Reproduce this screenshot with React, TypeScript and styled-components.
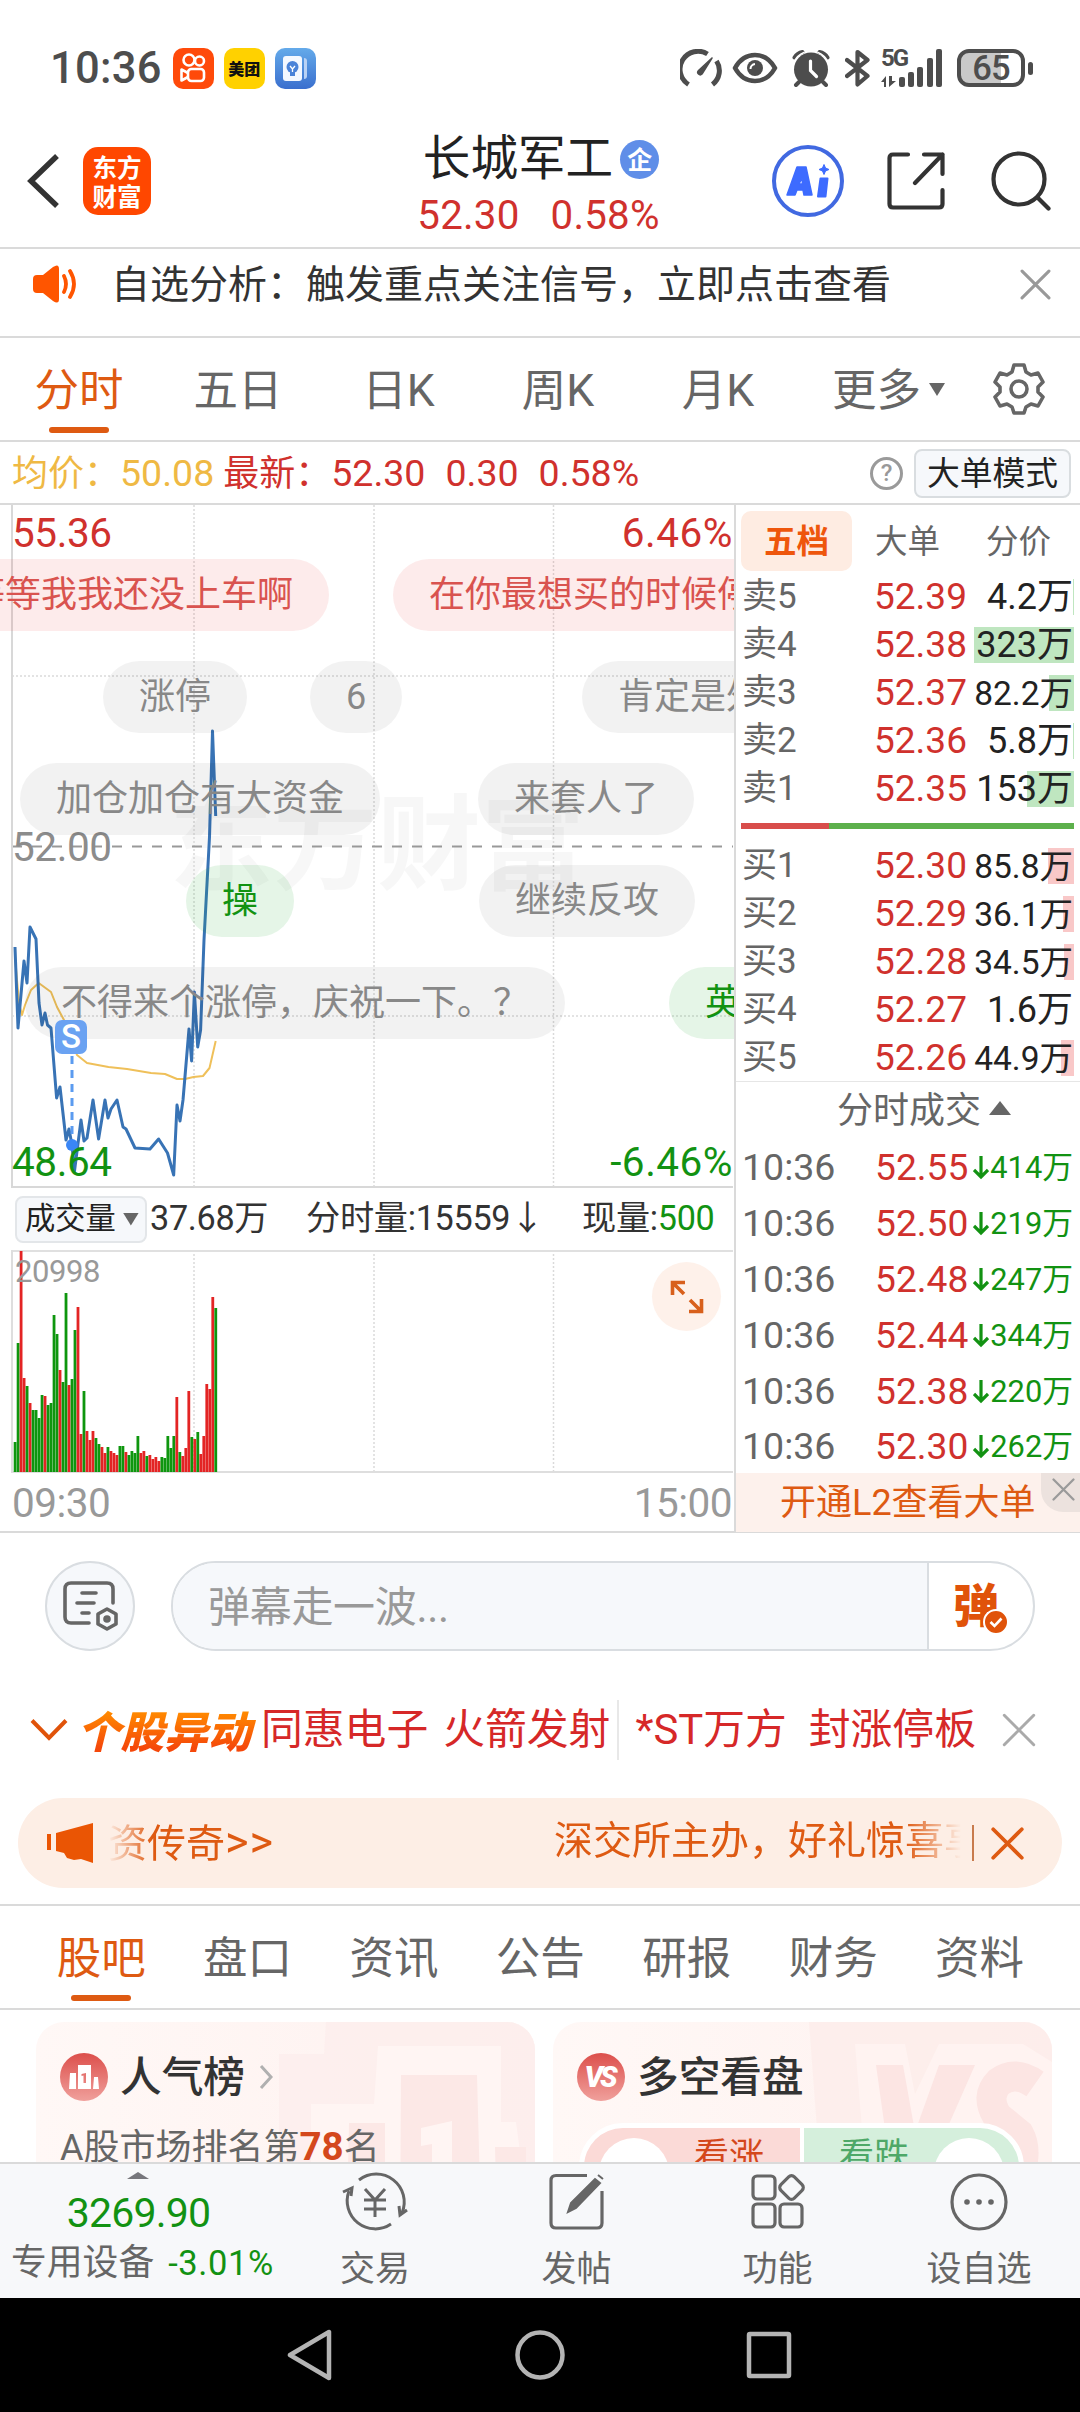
import React from 'react';
import styled, { createGlobalStyle, css } from 'styled-components';

const RED = '#d0312d';
const GREEN = '#129212';
const ORANGE = '#de5a12';
const LINE = '#dadada';

const Global = createGlobalStyle`
  html, body { margin: 0; padding: 0; background: #fff; }
  * { box-sizing: border-box; }
  body {
    font-family: Roboto, "Noto Sans CJK SC", sans-serif;
    line-height: 1.2;
    color: #333;
    -webkit-font-smoothing: antialiased;
  }
  svg { display: block; flex: none; }
`;

const Page = styled.div`
  width: 1080px;
  height: 2412px;
  display: flex;
  flex-direction: column;
  overflow: hidden;
  background: #fff;
  white-space: nowrap;
`;

/* ---------- status bar ---------- */
const StatusBar = styled.div`
  height: 110px;
  padding: 28px 47px 0 50px;
  display: flex;
  align-items: flex-start;
  justify-content: space-between;
`;
const StatusGroup = styled.div`
  height: 80px;
  display: flex;
  align-items: center;
  gap: 10px;
`;
const StatusIcon = styled.span<{ $ml?: number }>`
  margin-left: ${(p) => p.$ml || 0}px;
`;
const Clock = styled.span`
  font-size: 43.5px;
  font-weight: 500;
  line-height: 80px;
  padding-top: 1px;
  color: #4d4d4d;
  letter-spacing: 0.3px;
  margin-right: 1px;
`;
const AppTile = styled.span<{ $bg: string }>`
  width: 41px;
  height: 41px;
  border-radius: 10px;
  background: ${(p) => p.$bg};
  display: flex;
  align-items: center;
  justify-content: center;
  font: 900 16px/41px "Noto Sans CJK SC", sans-serif;
  color: #111;
`;
const Signal = styled.div`
  width: 64px;
  height: 38px;
  display: grid;
  grid-template-columns: 26px 1fr;
`;
const SignalLeft = styled.div`
  display: flex;
  flex-direction: column;
  justify-content: space-between;
  font: 700 24px/19px Roboto, sans-serif;
  letter-spacing: -2px;
  color: #4d4d4d;
`;
const Bars = styled.div`
  display: flex;
  align-items: flex-end;
  gap: 3.2px;
  margin-left: -8px;
`;
const Bar = styled.i<{ $h: number }>`
  width: 6px;
  height: ${(p) => p.$h}px;
  border-radius: 2px;
  background: #4d4d4d;
`;
const BatteryWrap = styled.div`
  display: flex;
  align-items: center;
  gap: 3px;
  margin-left: 2px;
`;
const Battery = styled.div`
  width: 68px;
  height: 38px;
  border: 4px solid #4d4d4d;
  border-radius: 12px;
  background: linear-gradient(90deg, #c9c9c9 66%, #fff 66%);
  text-align: center;
  font: 500 34.5px/31px Roboto, sans-serif;
  letter-spacing: -0.8px;
  color: #4d4d4d;
`;
const Nub = styled.i`
  width: 5px;
  height: 13px;
  border-radius: 3px;
  background: #4d4d4d;
`;

/* ---------- header ---------- */
const Header = styled.header`
  height: 139px;
  border-bottom: 2px solid ${LINE};
  display: grid;
  grid-template-columns: 405px 1fr 405px;
`;
const HeaderLeft = styled.div`
  display: flex;
  align-items: center;
  padding: 4px 0 0 26px;
  gap: 23px;
`;
const Logo = styled.div`
  width: 68px;
  height: 68px;
  border-radius: 15px;
  background: #ff4700;
  color: #fff;
  font: 700 24.5px/29px "Noto Sans CJK SC", sans-serif;
  display: flex;
  flex-direction: column;
  align-items: center;
  justify-content: center;
`;
const HeaderMid = styled.div`
  display: flex;
  flex-direction: column;
  align-items: center;
  padding-top: 19px;
`;
const TitleRow = styled.div`
  height: 60px;
  display: flex;
  align-items: center;
  gap: 7px;
  padding-left: 2px;
  font-size: 47.6px;
  line-height: 60px;
  color: #222;
`;
const QiBadge = styled.span`
  width: 39px;
  height: 39px;
  border-radius: 50%;
  background: #5f8ee8;
  color: #fff;
  font: 700 25px/37px "Noto Sans CJK SC", sans-serif;
  text-align: center;
`;
const QuoteRow = styled.div`
  height: 50px;
  display: flex;
  align-items: center;
  gap: 31px;
  margin-top: 2px;
  font-size: 40.3px;
  letter-spacing: 0.2px;
  padding-right: 3px;
  color: ${RED};
`;
const HeaderRight = styled.div`
  display: flex;
  align-items: center;
  padding: 4px 0 0 97px;
`;
const AiBadge = styled.div`
  width: 72px;
  height: 72px;
  border: 4px solid #4169e1;
  border-radius: 50%;
  display: flex;
  align-items: center;
  justify-content: center;
  margin-right: 43px;
`;
const SearchButton = styled.span`
  margin-left: 46px;
`;

/* ---------- notice ---------- */
const Notice = styled.div`
  height: 89px;
  border-bottom: 2px solid ${LINE};
  display: flex;
  align-items: center;
  padding: 0 29px 17px 33px;
`;
const NoticeText = styled.span`
  flex: 1;
  padding: 1px 0 0 32px;
  font-size: 39px;
  line-height: 60px;
`;

/* ---------- period tabs ---------- */
const Tabs = styled.nav`
  height: 104px;
  border-bottom: 2px solid ${LINE};
  display: grid;
  grid-template-columns: 158px 160px 161px 158px 162px 171px 98px;
`;
const Tab = styled.div<{ $active?: boolean }>`
  display: flex;
  flex-direction: column;
  align-items: center;
  font-size: 44.5px;
  line-height: 60px;
  padding-top: 23px;
  color: ${(p) => (p.$active ? ORANGE : '#666')};
  ${(p) =>
    p.$active &&
    css`
      &::after {
        content: '';
        width: 60px;
        height: 6px;
        border-radius: 3px;
        margin-top: 6px;
        background: ${ORANGE};
      }
    `}
`;
const MoreTab = styled(Tab)`
  flex-direction: row;
  align-items: flex-start;
  justify-content: flex-start;
  padding-left: 33px;
  gap: 8px;
`;
const TabGear = styled.div`
  display: flex;
  align-items: center;
  justify-content: center;
`;

const Caret = styled.i<{ $w: number; $h: number; $up?: boolean; $c?: string }>`
  display: inline-block;
  width: ${(p) => p.$w}px;
  height: ${(p) => p.$h}px;
  background: ${(p) => p.$c || '#666'};
  clip-path: ${(p) => (p.$up ? 'polygon(50% 0, 100% 100%, 0 100%)' : 'polygon(0 0, 100% 0, 50% 100%)')};
`;
const MoreCaret = styled(Caret)`
  margin-top: 22px;
`;

/* ---------- average price strip ---------- */
const InfoRow = styled.div`
  height: 63px;
  border-bottom: 2px solid ${LINE};
  display: flex;
  align-items: center;
  padding: 2px 9px 0 12px;
  font-size: 36px;
  color: ${RED};
`;
const InfoItem = styled.span<{ $c?: string; $ml?: number }>`
  color: ${(p) => p.$c || RED};
  margin-left: ${(p) => p.$ml || 0}px;
`;
const InfoNumber = styled.span`
  font-size: 37.5px;
  letter-spacing: 0;
`;
const Help = styled.span`
  width: 33px;
  height: 33px;
  border: 3px solid #9a9a9a;
  border-radius: 50%;
  color: #999;
  font: 500 24px/27px Roboto, sans-serif;
  text-align: center;
  margin-left: auto;
`;
const ModeButton = styled.span`
  width: 157px;
  height: 49px;
  margin-left: 11px;
  border: 2px solid #d9dde0;
  border-radius: 8px;
  background: #f6f8fb;
  color: #222;
  font-size: 32.8px;
  line-height: 46px;
  text-align: center;
`;

/* ---------- chart section ---------- */
const Market = styled.section`
  height: 1028px;
  border-bottom: 2px solid ${LINE};
  display: grid;
  grid-template-columns: 734px 346px;
`;
const ChartColumn = styled.div`
  display: flex;
  flex-direction: column;
  min-width: 0;
`;
const PriceChart = styled.div`
  position: relative;
  height: 684px;
  overflow: hidden;
`;
const PlotLayer = styled.div`
  position: absolute;
  inset: 0;
`;
const AxisLabel = styled.span<{ $top: number; $right?: boolean; $c: string; $s?: number }>`
  position: absolute;
  top: ${(p) => p.$top}px;
  ${(p) => (p.$right ? 'right: 1px; letter-spacing: 0.5px;' : 'left: 12px; letter-spacing: -0.4px;')}
  font-size: ${(p) => p.$s || 40.5}px;
  line-height: 48px;
  color: ${(p) => p.$c};
`;
const VolumeMax = styled.span`
  padding-left: 3px;
`;
const Watermark = styled.span`
  position: absolute;
  left: 169px;
  top: 267px;
  font: 700 104px/130px "Noto Sans CJK SC", sans-serif;
  color: rgba(0, 0, 0, 0.03);
`;
const tones = {
  gray: ['rgba(0,0,0,0.05)', '#888'],
  red: ['rgba(240,60,60,0.1)', '#d9534f'],
  green: ['rgba(40,170,60,0.12)', '#129212'],
};
const Bullet = styled.span<{ $x: number; $lane: number; $tone: keyof typeof tones }>`
  position: absolute;
  left: ${(p) => p.$x}px;
  top: ${(p) => 54 + p.$lane * 102}px;
  height: 72px;
  padding: 0 36px;
  border-radius: 36px;
  font-size: 36px;
  line-height: 73px;
  background: ${(p) => tones[p.$tone][0]};
  color: ${(p) => tones[p.$tone][1]};
`;
const SellMark = styled.span`
  position: absolute;
  left: 55px;
  top: 515px;
  width: 32px;
  height: 34px;
  border-radius: 7px;
  background: #6aa2f2;
  color: #fff;
  font: 500 33px/34px Roboto, sans-serif;
  text-align: center;
`;
const VolumeInfo = styled.div`
  height: 61px;
  display: flex;
  align-items: center;
  padding: 0 0 1px 15px;
  font-size: 34.2px;
  color: #333;
`;
const VolumeSelect = styled.span`
  width: 132px;
  height: 47px;
  border: 2px solid #e3e6e9;
  border-radius: 8px;
  background: #f6f8fb;
  display: flex;
  align-items: center;
  gap: 7px;
  padding-left: 8px;
  margin-right: 3px;
  font-size: 30.3px;
  color: #222;
`;
const VolumeItem = styled.span<{ $w: number }>`
  width: ${(p) => p.$w}px;
  letter-spacing: -0.3px;
`;
const Down = styled.em`
  font-style: normal;
  color: ${GREEN};
`;
const VolumeChart = styled.div`
  position: relative;
  height: 223px;
`;
const ExpandButton = styled.span`
  position: absolute;
  left: 652px;
  top: 12px;
  width: 69px;
  height: 69px;
  border-radius: 50%;
  background: #fef1ea;
  display: flex;
  align-items: center;
  justify-content: center;
`;
const TimeAxis = styled.div`
  flex: 1;
  display: flex;
  justify-content: space-between;
  padding: 3px 2px 0 12px;
  font-size: 40.5px;
  line-height: 54px;
  letter-spacing: -0.5px;
  color: #999;
`;

/* ---------- order book ---------- */
const Book = styled.aside`
  border-left: 2px solid ${LINE};
  display: flex;
  flex-direction: column;
  min-height: 0;

  > * {
    flex: none;
  }
`;
const BookTabs = styled.div`
  height: 66px;
  padding: 6px 0 0 5px;
  display: grid;
  grid-template-columns: 111px 111px 111px;
`;
const BookTab = styled.span<{ $active?: boolean }>`
  height: 60px;
  border-radius: 10px;
  text-align: center;
  font-size: 32.5px;
  line-height: 62px;
  color: ${(p) => (p.$active ? '#ee560c' : '#666')};
  font-weight: ${(p) => (p.$active ? 700 : 400)};
  background: ${(p) => (p.$active ? '#feece2' : 'transparent')};
`;
const Levels = styled.div`
  padding: 2px 6px 0 5px;
`;
const Level = styled.div`
  height: 47.9px;
  display: grid;
  grid-template-columns: 133px 99px 101px;
  align-items: center;
  line-height: 48px;
`;
const LevelName = styled.span`
  padding-left: 1px;
  font-size: 35px;
  color: #666;
`;
const LevelPrice = styled.span`
  font-size: 37px;
  color: ${RED};
`;
const LevelVolume = styled.span<{ $fill: number; $buy?: boolean; $tight?: boolean }>`
  height: 36px;
  font-size: ${(p) => (p.$tight ? 33.5 : 36)}px;
  line-height: 37px;
  color: #222;
  display: flex;
  justify-content: flex-end;
  padding-right: 1px;
  background: linear-gradient(
    270deg,
    ${(p) => (p.$buy ? '#f9c8c8' : '#bfe6c0')} ${(p) => p.$fill}px,
    transparent ${(p) => p.$fill}px
  );
`;
const Ratio = styled.div`
  height: 6px;
  margin: 10.5px 6px 11px 5px;
  background: linear-gradient(90deg, #d84d4b 88px, #5db04c 88px);
`;
const TradesTitle = styled.div`
  height: 57px;
  border-top: 1px solid #e6e6e6;
  display: flex;
  align-items: center;
  padding: 3px 0 0 101px;
  gap: 8px;
  font-size: 36px;
  color: #666;
`;
const TitleCaret = styled(Caret)`
  margin-bottom: 8px;
`;
const Trade = styled.div`
  height: 55.8px;
  display: grid;
  grid-template-columns: 133px 94px 1fr;
  align-items: center;
  padding: 0 7px 0 6px;
  font-size: 37.5px;
  line-height: 56px;
  color: #666;
`;
const TradePrice = styled.span`
  font-size: 37.2px;
  color: ${RED};
`;
const TradeVolume = styled.span`
  display: flex;
  align-items: center;
  justify-content: flex-end;
  gap: 1px;
  padding-top: 2px;
  font-size: 30.8px;
  color: ${GREEN};
`;
const Promo = styled.div`
  position: relative;
  height: 58.5px;
  background: #fdf1ec;
  padding-left: 44px;
  font-size: 36px;
  line-height: 61px;
  color: ${ORANGE};
`;
const PromoClose = styled.span`
  position: absolute;
  right: 0;
  top: 0;
  width: 39px;
  height: 39px;
  border-bottom-left-radius: 22px;
  background: #ece2de;
  padding: 5px 0 0 11px;
`;

/* ---------- comment input ---------- */
const Composer = styled.div`
  height: 146px;
  padding: 28px 45px 0;
  display: flex;
  gap: 36px;
`;
const RoundButton = styled.span`
  width: 90px;
  height: 90px;
  border: 2px solid #d9dde1;
  border-radius: 50%;
  background: #f6f8fb;
  display: flex;
  align-items: center;
  justify-content: center;
`;
const InputBox = styled.div`
  width: 864px;
  height: 90px;
  border: 2px solid #d9dde1;
  border-radius: 45px;
  overflow: hidden;
  display: grid;
  grid-template-columns: 1fr 106px;
`;
const Placeholder = styled.span`
  background: #f6f8fb;
  padding-left: 35px;
  font-size: 42px;
  line-height: 89px;
  letter-spacing: -0.3px;
  color: #999;
`;
const SendButton = styled.span`
  border-left: 2px solid #d9dde1;
  display: flex;
  align-items: center;
  padding: 0 0 11px 24px;
  font: 900 46px/70px "Noto Sans CJK SC", sans-serif;
  color: #e0530a;
`;
const SendTick = styled.span`
  margin: 40px 0 0 -16px;
`;

/* ---------- movers ---------- */
const Movers = styled.div`
  height: 119px;
  display: flex;
  align-items: center;
  padding: 0 0 18px 30px;
  font-size: 41.8px;
  line-height: 60px;
  color: #d62828;
`;
const MoversBrand = styled.span`
  margin: 0 4px 0 8px;
  padding: 0 6px 0 1px;
  font: italic 900 43.5px/60px "Noto Sans CJK SC", sans-serif;
  background: linear-gradient(180deg, #ff8a00 20%, #f5480a 80%);
  -webkit-background-clip: text;
  color: transparent;
`;
const Mover = styled.span<{ $mr: number }>`
  margin-right: ${(p) => p.$mr}px;
`;
const MoversDivider = styled.i`
  width: 2px;
  height: 60px;
  flex: none;
  background: #e8e8e8;
  margin-right: 16px;
`;

/* ---------- banner ---------- */
const Banner = styled.div`
  height: 90px;
  margin: 0 18px 16px;
  border-radius: 45px;
  background: #fdeee5;
  display: flex;
  align-items: center;
  padding: 0 38px 0 29px;
  font-size: 39px;
  color: ${ORANGE};
`;
const Marquee = styled.div`
  flex: 1;
  margin: 0 11px 0 14px;
  display: flex;
  overflow: hidden;
  line-height: 89px;
  mask-image: linear-gradient(90deg, transparent 0, #000 44px, #000 calc(100% - 56px), transparent 100%);
`;
const MarqueeText = styled.span<{ $w?: number }>`
  flex: none;
  ${(p) => p.$w && `width: ${p.$w}px;`}
`;
const Chevrons = styled.span`
  font-size: 45px;
  letter-spacing: 1px;
`;
const BannerDivider = styled.i`
  width: 2px;
  height: 36px;
  background: #c87b4d;
  margin-right: 17px;
`;

/* ---------- section tabs ---------- */
const SectionTabs = styled(Tabs)`
  height: 106px;
  border-top: 2px solid ${LINE};
  grid-template-columns: repeat(7, 146.4px);
  padding-left: 28px;
`;

/* ---------- cards ---------- */
const Cards = styled.div`
  height: 152px;
  padding: 12px 28px 0 36px;
  display: grid;
  grid-template-columns: 499px 499px;
  gap: 18px;
  overflow: hidden;
`;
const Card = styled.div`
  position: relative;
  height: 240px;
  border-radius: 28px;
  overflow: hidden;
  background: linear-gradient(90deg, #fff8f6, #fef1ef);
  padding: 25px 24px 0;
`;
const CardArt = styled.div`
  position: absolute;
  inset: 0;
`;
const CardHead = styled.div`
  position: relative;
  height: 60px;
  display: flex;
  align-items: center;
  gap: 12px;
  font-size: 41.7px;
  font-weight: 500;
  line-height: 63px;
  color: #333;
`;
const RankLine = styled.div`
  position: relative;
  margin-top: 13px;
  font-size: 36px;
  line-height: 54px;
  color: #666;
`;
const RankNumber = styled.b`
  font-size: 38.5px;
  color: #d4481c;
`;
const CardIcon = styled.span`
  width: 48px;
  height: 48px;
  border-radius: 50%;
  background: linear-gradient(180deg, #dc4f4b, #f0a09c);
  color: #fff;
  font: italic 900 29px/48px Roboto, sans-serif;
  letter-spacing: -3px;
  padding-right: 3px;
  text-align: center;
`;
const ArtIcon = styled(CardIcon)`
  padding: 0;
`;
const Vote = styled.div`
  position: relative;
  height: 88px;
  margin: 16px 4px 0 2px;
  border: 5px solid #fff;
  border-radius: 44px;
  overflow: hidden;
  display: grid;
  grid-template-columns: 1fr 1fr;
  gap: 4px;
  background: #fff;
`;
const VoteSide = styled.span<{ $up?: boolean }>`
  display: flex;
  flex-direction: ${(p) => (p.$up ? 'row' : 'row-reverse')};
  gap: 25px;
  padding: 10px 15px;
  background: ${(p) => (p.$up ? '#fbdad7' : '#d5efdc')};
  color: ${(p) => (p.$up ? '#d4481c' : '#4ea868')};
  font-size: 35px;
  line-height: 38px;
`;
const Knob = styled.i`
  width: 70px;
  height: 70px;
  border-radius: 50%;
  background: #fff;
`;

/* ---------- bottom bar ---------- */
const BottomBar = styled.footer`
  height: 136px;
  border-top: 2px solid ${LINE};
  background: #f7f8fa;
  display: grid;
  grid-template-columns: 274px 202px 201px 201px 202px;
`;
const IndexCell = styled.div`
  display: flex;
  flex-direction: column;
  align-items: center;
  padding-top: 8px;
`;
const IndexCaret = styled(Caret)`
  margin-left: 2px;
`;
const IndexValue = styled.span`
  margin: 7px 0 0 3px;
  height: 53px;
  font-size: 41px;
  line-height: 54px;
  letter-spacing: -0.8px;
  color: ${GREEN};
`;
const IndexName = styled.span`
  width: 100%;
  display: flex;
  gap: 14px;
  padding-left: 11px;
  font-size: 35.8px;
  line-height: 48px;
  color: #666;
`;
const IndexChange = styled.span`
  font-size: 34.5px;
  letter-spacing: 0.6px;
  color: ${GREEN};
`;
const Action = styled.div`
  display: flex;
  flex-direction: column;
  align-items: center;
  padding-top: 8px;
  gap: 14px;
  font-size: 35px;
  line-height: 48px;
  color: #666;
`;

const SysNav = styled.div`
  height: 114px;
  background: #000;
  display: flex;
  justify-content: center;
  align-items: center;
  gap: 181px;
  padding-right: 2px;
`;

/* ---------- icons ---------- */
const Cross = ({ s, c, w = 3 }: { s: number; c: string; w?: number }) => (
  <svg width={s} height={s} viewBox="0 0 30 30" fill="none" stroke={c} strokeWidth={w} strokeLinecap="round">
    <path d="M2 2 28 28M28 2 2 28" />
  </svg>
);
const Gauge = () => (
  <svg width="42" height="38" viewBox="0 0 42 38" fill="none" stroke="#4d4d4d" strokeWidth="5">
    <path d="M8.500 35.500A17.500 17.500 0 0 1 27.500 5" />
    <path d="M36.500 12A17.500 17.500 0 0 1 32.500 35.500" />
    <path d="M32 9 18.500 21.500a2.400 2.400 0 0 0 3.500 3.500Z" fill="#4d4d4d" strokeWidth="1.500" strokeLinejoin="round" />
  </svg>
);
const Eye = () => (
  <svg width="46" height="32" viewBox="0 0 46 32" fill="none" stroke="#4d4d4d" strokeWidth="4.600">
    <path d="M3 16C8 7 15 3 23 3s15 4 20 13c-5 9-12 13-20 13S8 25 3 16Z" strokeLinejoin="round" />
    <circle cx="23" cy="16" r="8" fill="#4d4d4d" stroke="none" />
    <path d="M18.500 17a5 5 0 0 1 4.500-5" stroke="#fff" strokeWidth="2" />
  </svg>
);
const Alarm = () => (
  <svg width="38" height="38" viewBox="0 0 38 38" fill="none" stroke="#4d4d4d" strokeWidth="4" strokeLinecap="round">
    <circle cx="19" cy="20.500" r="17" fill="#4d4d4d" stroke="none" />
    <path d="M2.500 8.500a12 12 0 0 1 8-5.500M35.500 8.500a12 12 0 0 0-8-5.500M7 33l-3 3M31 33l3 3" />
    <path d="M2 13a19 19 0 0 1 10-9.500M36 13a19 19 0 0 0-10-9.500" stroke="#fff" strokeWidth="1.500" />
    <path d="M18.500 12v9.500l6 6" stroke="#fff" strokeWidth="3.200" />
  </svg>
);
const Bluetooth = () => (
  <svg width="26" height="38" viewBox="0 0 26 38" fill="none" stroke="#4d4d4d" strokeWidth="4.200" strokeLinecap="round" strokeLinejoin="round">
    <path d="M2 11 22.500 27 12.500 35.500V3L22.500 11 2 27" />
  </svg>
);
const Gear = () => (
  <svg width="54" height="54" viewBox="0 0 54 54" fill="none" stroke="#666" strokeWidth="3.600" strokeLinejoin="round">
    <path d="M22 3h10l2 7 5 3 7-2 5 9-5 5v5l5 5-5 9-7-2-5 3-2 6H22l-2-6-5-3-7 2-5-9 5-5v-5l-5-5 5-9 7 2 5-3Z" />
    <circle cx="27" cy="27" r="8" />
  </svg>
);
const SearchIcon = () => (
  <svg width="60" height="60" viewBox="0 0 60 60" fill="none" stroke="#333" strokeWidth="4.200" strokeLinecap="round">
    <circle cx="28" cy="28" r="25.500" />
    <path d="M46.500 46.500 57.500 57.500" />
  </svg>
);

const priceLine =
  '15,947 18,1028 24,961 27,983 30,927 36,939 39,1003 42,1025 45,1013 47.5,1025 51,1028 56.600,1098 60,1087 66,1140 69,1129 72,1145 74.500,1171 81,1120 84,1141 87,1138 93,1100 98.600,1139 105,1100 108,1118 111,1109 117,1100 123,1127 126,1129 135,1148 150,1149 158.600,1139 167.500,1153 173.700,1175 177,1105 180,1121 183,1100 189,1029 191.600,1061 194.400,992 197.700,1047 200.600,1030 204,940 209.500,837 212.500,731 215.700,816';
const avgLine =
  '15,957 19,1003 22,1015 25,1005 31,990 38.700,983 51,992 57,1007 64,1020 71,1040 77,1055 87,1063 108.500,1067 127,1069 151,1073 165,1074 177,1079 185,1079 193.500,1077 203,1076 209.500,1068 215.700,1041';

const bars =
  'g30 g129 r221 r94 g86 r69 g62 g62 g54 g77 r76 g67 g69 g157 g138 r102 g90 g179 r87 g93 g142 r165 r38 g81 r41 r32 r41 g34 g28 r25 r19 g25 r21 r19 r17 g26 g26 r20 g17 g21 g19 g36 r19 r21 g16 r17 r13 r15 r11 g15 g14 g36 g24 g36 r75 g20 r16 r24 r81 g35 r33 g40 r18 r36 r88 r83 r175 g164'.split(' ');

const bullets: { x: number; lane: number; tone: keyof typeof tones; text: string }[] = [
  { x: -67, lane: 0, tone: 'red', text: '等等我我还没上车啊' },
  { x: 393, lane: 0, tone: 'red', text: '在你最想买的时候停' },
  { x: 103, lane: 1, tone: 'gray', text: '涨停' },
  { x: 310, lane: 1, tone: 'gray', text: '6' },
  { x: 582, lane: 1, tone: 'gray', text: '肯定是外' },
  { x: 20, lane: 2, tone: 'gray', text: '加仓加仓有大资金' },
  { x: 478, lane: 2, tone: 'gray', text: '来套人了' },
  { x: 186, lane: 3, tone: 'green', text: '操' },
  { x: 479, lane: 3, tone: 'gray', text: '继续反攻' },
  { x: 25, lane: 4, tone: 'gray', text: '不得来个涨停，庆祝一下。？' },
  { x: 669, lane: 4, tone: 'green', text: '英' },
];

type Row = [string, string, string, number];
const asks: Row[] = [
  ['卖5', '52.39', '4.2万', 1],
  ['卖4', '52.38', '323万', 100],
  ['卖3', '52.37', '82.2万', 25],
  ['卖2', '52.36', '5.8万', 1],
  ['卖1', '52.35', '153万', 47],
];
const bids: Row[] = [
  ['买1', '52.30', '85.8万', 26],
  ['买2', '52.29', '36.1万', 11],
  ['买3', '52.28', '34.5万', 10],
  ['买4', '52.27', '1.6万', 0],
  ['买5', '52.26', '44.9万', 13],
];
const trades = [
  ['52.55', '414万'],
  ['52.50', '219万'],
  ['52.48', '247万'],
  ['52.44', '344万'],
  ['52.38', '220万'],
  ['52.30', '262万'],
];

const Grid = ({ h }: { h: number }) => (
  <path
    d={`M194 0V${h}M374 0V${h}M553.500 0V${h}`}
    stroke="#dadada"
    strokeWidth="1.500"
    strokeDasharray="2 2"
  />
);

function LevelRow({ row, buy }: { row: Row; buy?: boolean }) {
  return (
    <Level>
      <LevelName>{row[0]}</LevelName>
      <LevelPrice>{row[1]}</LevelPrice>
      <LevelVolume $fill={row[3]} $buy={buy} $tight={row[2].length > 4}>
        {row[2]}
      </LevelVolume>
    </Level>
  );
}

export default function App() {
  return (
    <Page>
      <Global />
      <StatusBar>
        <StatusGroup>
          <Clock>10:36</Clock>
          <AppTile $bg="#ff4a0a">
            <svg width="29" height="32" viewBox="0 0 29 32" fill="none" stroke="#fff" strokeWidth="2.600">
              <circle cx="10" cy="8" r="5.500" />
              <circle cx="20.500" cy="9" r="4.500" />
              <rect x="9" y="17" width="16" height="12" rx="3.500" />
              <path d="M9 21 2.500 17.500v11L9 25" strokeLinejoin="round" />
            </svg>
          </AppTile>
          <AppTile $bg="#ffd100">美团</AppTile>
          <AppTile $bg="linear-gradient(180deg,#64aaea,#3a6fce)">
            <svg width="25" height="27" viewBox="0 0 25 27">
              <rect x="0" y="1" width="19" height="25" rx="3" fill="#f4f8ff" />
              <path d="M21 3q3 0 3 3v15q0 3-3 3Z" fill="#b9d2f5" />
              <circle cx="9.500" cy="12" r="6" fill="#4b83d8" />
              <path d="M7 16h5v5H7Z" fill="#4b83d8" />
              <path d="M7 11l2.500 3 2.500-3M9.500 14v3" stroke="#fff" fill="none" strokeWidth="1.300" />
            </svg>
          </AppTile>
        </StatusGroup>
        <StatusGroup>
          <Gauge />
          <Eye />
          <StatusIcon $ml={4}>
            <Alarm />
          </StatusIcon>
          <StatusIcon $ml={5}>
            <Bluetooth />
          </StatusIcon>
          <Signal>
            <SignalLeft>
              5G
              <svg width="16" height="11" viewBox="0 0 16 11" fill="#4d4d4d">
                <path d="M0 6 5 0v11H3V6ZM8 0v11l7-6h-4V0Z" />
              </svg>
            </SignalLeft>
            <Bars>
              <Bar $h={10} />
              <Bar $h={15} />
              <Bar $h={20} />
              <Bar $h={29} />
              <Bar $h={38} />
            </Bars>
          </Signal>
          <BatteryWrap>
            <Battery>65</Battery>
            <Nub />
          </BatteryWrap>
        </StatusGroup>
      </StatusBar>

      <Header>
        <HeaderLeft>
          <svg width="34" height="56" viewBox="0 0 34 56" fill="none" stroke="#333" strokeWidth="5.500">
            <path d="M31 3 5 28 31 53" />
          </svg>
          <Logo>
            <span>东方</span>
            <span>财富</span>
          </Logo>
        </HeaderLeft>
        <HeaderMid>
          <TitleRow>
            长城军工<QiBadge>企</QiBadge>
          </TitleRow>
          <QuoteRow>
            <span>52.30</span>
            <span>0.58%</span>
          </QuoteRow>
        </HeaderMid>
        <HeaderRight>
          <AiBadge>
            <svg width="46" height="36" viewBox="0 0 46 36" fill="#3d6bff" stroke="#3d6bff" strokeWidth="2" strokeLinejoin="round">
              <path fillRule="evenodd" d="M12 4h9l6 28h-8l-1-5h-6l-2 5H2ZM14 21h3.500l-.5-6Z" strokeWidth="1.500" />
              <path d="M35.500 15.500h7l-2 18h-7.500Z" />
              <path d="M39 1.500l1.500 3.500L44 6.500l-3.500 1.500L39 11.500l-1.500-3.500L34 6.500l3.500-1.500Z" strokeWidth="1" />
            </svg>
          </AiBadge>
          <svg width="58" height="58" viewBox="0 0 58 58" fill="none" stroke="#333" strokeWidth="4.200" strokeLinecap="round" strokeLinejoin="round">
            <path d="M21 2.500H6Q2.500 2.500 2.500 6V52Q2.500 55.500 6 55.500H52Q55.500 55.500 55.500 52V38M37 2.500H55.500V22M55.500 2.500 28 31" />
          </svg>
          <SearchButton>
            <SearchIcon />
          </SearchButton>
        </HeaderRight>
      </Header>

      <Notice>
        <svg width="46" height="40" viewBox="0 0 46 40" fill="#ff5500">
          <path d="M0 15q0-4 4-4h6L20 3q6-4 6 2v30q0 6-6 2L10 29H4q-4 0-4-4Z" />
          <path d="M31 12q4 8 0 16M37 7q8 13 0 26" fill="none" stroke="#ff5500" strokeWidth="3.800" strokeLinecap="round" />
        </svg>
        <NoticeText>自选分析：触发重点关注信号，立即点击查看</NoticeText>
        <Cross s={31} c="#999" />
      </Notice>

      <Tabs>
        <Tab $active>分时</Tab>
        <Tab>五日</Tab>
        <Tab>日K</Tab>
        <Tab>周K</Tab>
        <Tab>月K</Tab>
        <MoreTab>
          更多
          <MoreCaret $w={16} $h={13} />
        </MoreTab>
        <TabGear>
          <Gear />
        </TabGear>
      </Tabs>

      <InfoRow>
        <InfoItem $c="#efb944">
          均价：<InfoNumber>50.08</InfoNumber>
        </InfoItem>
        <InfoItem $ml={9}>
          最新：<InfoNumber>52.30</InfoNumber>
        </InfoItem>
        <InfoItem $ml={20}>
          <InfoNumber>0.30</InfoNumber>
        </InfoItem>
        <InfoItem $ml={20}>
          <InfoNumber>0.58%</InfoNumber>
        </InfoItem>
        <Help>?</Help>
        <ModeButton>大单模式</ModeButton>
      </InfoRow>

      <Market>
        <ChartColumn>
          <PriceChart>
            <Watermark>东方财富</Watermark>
            <PlotLayer>
              <svg width="734" height="684" viewBox="0 505 734 684" fill="none">
                <g transform="translate(0 505)">
                  <Grid h={682} />
                </g>
                <path d="M12 676H733M12 1016H733" stroke="#dadada" strokeWidth="1.500" strokeDasharray="2 2" />
                <path d="M12 846.500H733" stroke="#999" strokeWidth="2" strokeDasharray="10 10" />
                <path d="M12 505V1187H733" stroke="#d8d8d8" strokeWidth="2" />
                <polyline points={avgLine} stroke="#efc05a" strokeWidth="2" strokeLinejoin="round" />
                <polyline points={priceLine} stroke="#3873b5" strokeWidth="3" strokeLinejoin="round" />
                <path d="M72 1056V1140" stroke="#5b9bf0" strokeWidth="3" strokeDasharray="8 6" />
                <circle cx="72" cy="1145" r="6" fill="#3a86f5" />
              </svg>
            </PlotLayer>
            <AxisLabel $top={4} $c={RED}>55.36</AxisLabel>
            <AxisLabel $top={4} $c={RED} $right>6.46%</AxisLabel>
            <AxisLabel $top={318} $c="#8c8c8c">52.00</AxisLabel>
            <AxisLabel $top={633} $c={GREEN}>48.64</AxisLabel>
            <AxisLabel $top={633} $c={GREEN} $right>-6.46%</AxisLabel>
            {bullets.map((b) => (
              <Bullet key={b.text} $x={b.x} $lane={b.lane} $tone={b.tone}>
                {b.text}
              </Bullet>
            ))}
            <SellMark>S</SellMark>
          </PriceChart>
          <VolumeInfo>
            <VolumeSelect>
              成交量
              <Caret $w={16} $h={13} />
            </VolumeSelect>
            <VolumeItem $w={156}>37.68万</VolumeItem>
            <VolumeItem $w={276}>分时量:15559↓</VolumeItem>
            <VolumeItem $w={140}>
              现量:<Down>500</Down>
            </VolumeItem>
          </VolumeInfo>
          <VolumeChart>
            <svg width="734" height="223" viewBox="0 0 734 223" fill="none">
              <Grid h={222} />
              <path d="M12 1H733" stroke="#e0e0e0" strokeWidth="2" />
              <path d="M12 0V222H733" stroke="#dedede" strokeWidth="2" />
              {bars.map((b, i) => (
                <rect
                  key={i}
                  x={13.7 + i * 2.995}
                  y={222 - Number(b.slice(1))}
                  width="2.800"
                  height={Number(b.slice(1))}
                  fill={b[0] === 'r' ? '#e32424' : '#0e960e'}
                />
              ))}
            </svg>
            <AxisLabel $top={-2} $c="#999" $s={31}>
              <VolumeMax>20998</VolumeMax>
            </AxisLabel>
            <ExpandButton>
              <svg width="36" height="36" viewBox="0 0 36 36" fill="none" stroke="#d8601c" strokeWidth="3.600">
                <path d="M16 3.500H3.500V16M4 4 15 15M20 32.500H32.500V20M32 32 21 21" />
              </svg>
            </ExpandButton>
          </VolumeChart>
          <TimeAxis>
            <span>09:30</span>
            <span>15:00</span>
          </TimeAxis>
        </ChartColumn>

        <Book>
          <BookTabs>
            <BookTab $active>五档</BookTab>
            <BookTab>大单</BookTab>
            <BookTab>分价</BookTab>
          </BookTabs>
          <Levels>
            {asks.map((r) => (
              <LevelRow key={r[0]} row={r} />
            ))}
          </Levels>
          <Ratio />
          <Levels>
            {bids.map((r) => (
              <LevelRow key={r[0]} row={r} buy />
            ))}
          </Levels>
          <TradesTitle>
            分时成交
            <TitleCaret $w={22} $h={14} $up />
          </TradesTitle>
          {trades.map((t) => (
            <Trade key={t[0]}>
              <span>10:36</span>
              <TradePrice>{t[0]}</TradePrice>
              <TradeVolume>
                <svg width="16" height="24" viewBox="0 0 16 24" fill="none" stroke={GREEN} strokeWidth="3.200">
                  <path d="M8 0V21M1 14l7 7 7-7" />
                </svg>
                {t[1]}
              </TradeVolume>
            </Trade>
          ))}
          <Promo>
            开通L2查看大单
            <PromoClose>
              <Cross s={23} c="#9a9a9a" />
            </PromoClose>
          </Promo>
        </Book>
      </Market>

      <Composer>
        <RoundButton>
          <svg width="56" height="52" viewBox="0 0 56 52" fill="none" stroke="#666" strokeWidth="3.600" strokeLinecap="round" strokeLinejoin="round">
            <path d="M27 43H9Q3 43 3 37V9Q3 3 9 3H45Q51 3 51 9V23M20 13h14M15 23h17M20 33h7" />
            <path d="M45 29l9 5v10l-9 5-9-5V34Z" />
            <circle cx="45" cy="39" r="2" />
          </svg>
        </RoundButton>
        <InputBox>
          <Placeholder>弹幕走一波...</Placeholder>
          <SendButton>
            弹
            <SendTick>
              <svg width="26" height="26" viewBox="0 0 26 26">
                <circle cx="13" cy="13" r="12" fill="#e0530a" stroke="#fff" strokeWidth="2" />
                <path d="M7.500 13l4 4 7-7.500" fill="none" stroke="#fff" strokeWidth="2.600" />
              </svg>
            </SendTick>
          </SendButton>
        </InputBox>
      </Composer>

      <Movers>
        <svg width="38" height="24" viewBox="0 0 38 24" fill="none" stroke="#e0530a" strokeWidth="4">
          <path d="M2 2.500 19 20 36 2.500" />
        </svg>
        <MoversBrand>个股异动</MoversBrand>
        <Mover $mr={15}>同惠电子</Mover>
        <Mover $mr={7}>火箭发射</Mover>
        <MoversDivider />
        <Mover $mr={22}>*ST万方</Mover>
        <Mover $mr={26}>封涨停板</Mover>
        <Cross s={34} c="#aaa" w={2.6} />
      </Movers>

      <Banner>
        <svg width="47" height="40" viewBox="0 0 47 40" fill="#ea5504">
          <path d="M0 11h4v16H0ZM9 10 46 0v40l-12-4-7 1-7-2-3-5-8-2Z" />
        </svg>
        <Marquee>
          <MarqueeText $w={446}>
            资传奇<Chevrons>&gt;&gt;</Chevrons>
          </MarqueeText>
          <MarqueeText>深交所主办，好礼惊喜享</MarqueeText>
        </Marquee>
        <BannerDivider />
        <Cross s={33} c={ORANGE} w={3.4} />
      </Banner>

      <SectionTabs>
        <Tab $active>股吧</Tab>
        <Tab>盘口</Tab>
        <Tab>资讯</Tab>
        <Tab>公告</Tab>
        <Tab>研报</Tab>
        <Tab>财务</Tab>
        <Tab>资料</Tab>
      </SectionTabs>

      <Cards>
        <Card>
          <CardArt>
            <svg width="499" height="240" viewBox="0 0 499 240">
              <path d="M290 0H499V240H243V32H288Z" fill="#fdeeec" opacity=".8" />
              <path d="M342 24H465V100H480L499 240H275V82H338Z" fill="#fff5f3" />
              <path d="M365 53H441L446 240H364ZM313 101H349V240H310ZM459 125H490V240H462Z" fill="#fce8e6" />
              <path d="M385 106 416 99V240H396V122L385 124Z" fill="#fff5f3" />
            </svg>
          </CardArt>
          <CardHead>
            <ArtIcon>
              <svg width="48" height="48" viewBox="0 0 48 48" fill="#fff">
                <path fillRule="evenodd" d="M10 20h6v16H9ZM18 12h13v24H18ZM34 24h4l1 12h-6ZM21.500 21v2l2-.500V30h2.500V20Z" />
              </svg>
            </ArtIcon>
            <span>人气榜</span>
            <svg width="16" height="26" viewBox="0 0 16 26" fill="none" stroke="#b0b0b0" strokeWidth="3">
              <path d="M4 2 14 13 4 24" />
            </svg>
          </CardHead>
          <RankLine>
            A股市场排名第<RankNumber>78</RankNumber>名
          </RankLine>
        </Card>
        <Card>
          <CardArt>
            <svg width="499" height="240" viewBox="0 0 499 240" fill="none">
              <path d="M256 0H499V240H274Z" fill="#fdecea" opacity=".8" />
              <path d="M302 22H352L362 72 386 22H420L470 22 499 40V240H320Z" fill="#fff3f1" />
              <path d="M323 43H350L362 110 386 43H422L375 150H338Z" fill="#fce5e3" />
              <path d="M482 62Q462 48 446 60 432 74 444 94L466 112Q476 130 464 160" stroke="#fce5e3" strokeWidth="30" />
            </svg>
          </CardArt>
          <CardHead>
            <CardIcon>VS</CardIcon>
            <span>多空看盘</span>
          </CardHead>
          <Vote>
            <VoteSide $up>
              <Knob />
              看涨
            </VoteSide>
            <VoteSide>
              <Knob />
              看跌
            </VoteSide>
          </Vote>
        </Card>
      </Cards>

      <BottomBar>
        <IndexCell>
          <IndexCaret $w={22} $h={7} $up $c="#77777c" />
          <IndexValue>3269.90</IndexValue>
          <IndexName>
            专用设备<IndexChange>-3.01%</IndexChange>
          </IndexName>
        </IndexCell>
        <Action>
          <svg width="66" height="60" viewBox="0 0 66 60" fill="none" stroke="#666" strokeWidth="3">
            <path d="M17 8A28 28 0 0 1 60 41M49 52A28 28 0 0 1 7 19" />
            <path d="M1 20 10 16 9 24M65 38 58 43 57 34" />
            <path d="M23 17 33 28 43 17M22 28H44M22 37H44M33 28V45" />
          </svg>
          交易
        </Action>
        <Action>
          <svg width="60" height="60" viewBox="0 0 60 60" fill="none" stroke="#666" strokeWidth="3.200">
            <path d="M40 3.500H9Q4 3.500 4 8.500V51Q4 56 9 56H50Q55 56 55 51V19" />
            <path d="M48 7l5 4L29 36l-8 4 3-9ZM51 3l5 4" fill="#666" strokeWidth="2" />
          </svg>
          发帖
        </Action>
        <Action>
          <svg width="60" height="60" viewBox="0 0 60 60" fill="none" stroke="#666" strokeWidth="3.200">
            <rect x="5" y="4" width="22" height="23" rx="4" />
            <rect x="5" y="32" width="22" height="23" rx="4" />
            <rect x="32" y="32" width="22" height="23" rx="4" />
            <rect x="34" y="6" width="19" height="19" rx="4" transform="rotate(45 43.500 15.500)" />
          </svg>
          功能
        </Action>
        <Action>
          <svg width="60" height="60" viewBox="0 0 60 60" fill="none" stroke="#666" strokeWidth="3.200">
            <circle cx="30" cy="30" r="27" />
            <g fill="#666" stroke="none">
              <circle cx="18" cy="30" r="2.800" />
              <circle cx="30" cy="30" r="2.800" />
              <circle cx="42" cy="30" r="2.800" />
            </g>
          </svg>
          设自选
        </Action>
      </BottomBar>

      <SysNav>
        <svg width="48" height="52" viewBox="0 0 48 52" fill="none" stroke="#b4b4b4" strokeWidth="4.500" strokeLinejoin="round">
          <path d="M43 3V49L4 26Z" />
        </svg>
        <svg width="50" height="50" viewBox="0 0 50 50" fill="none" stroke="#b4b4b4" strokeWidth="4.500">
          <circle cx="25" cy="25" r="22.500" />
        </svg>
        <svg width="46" height="48" viewBox="0 0 46 48" fill="none" stroke="#b4b4b4" strokeWidth="4.500">
          <rect x="3" y="3" width="40" height="42" rx="1" />
        </svg>
      </SysNav>
    </Page>
  );
}
